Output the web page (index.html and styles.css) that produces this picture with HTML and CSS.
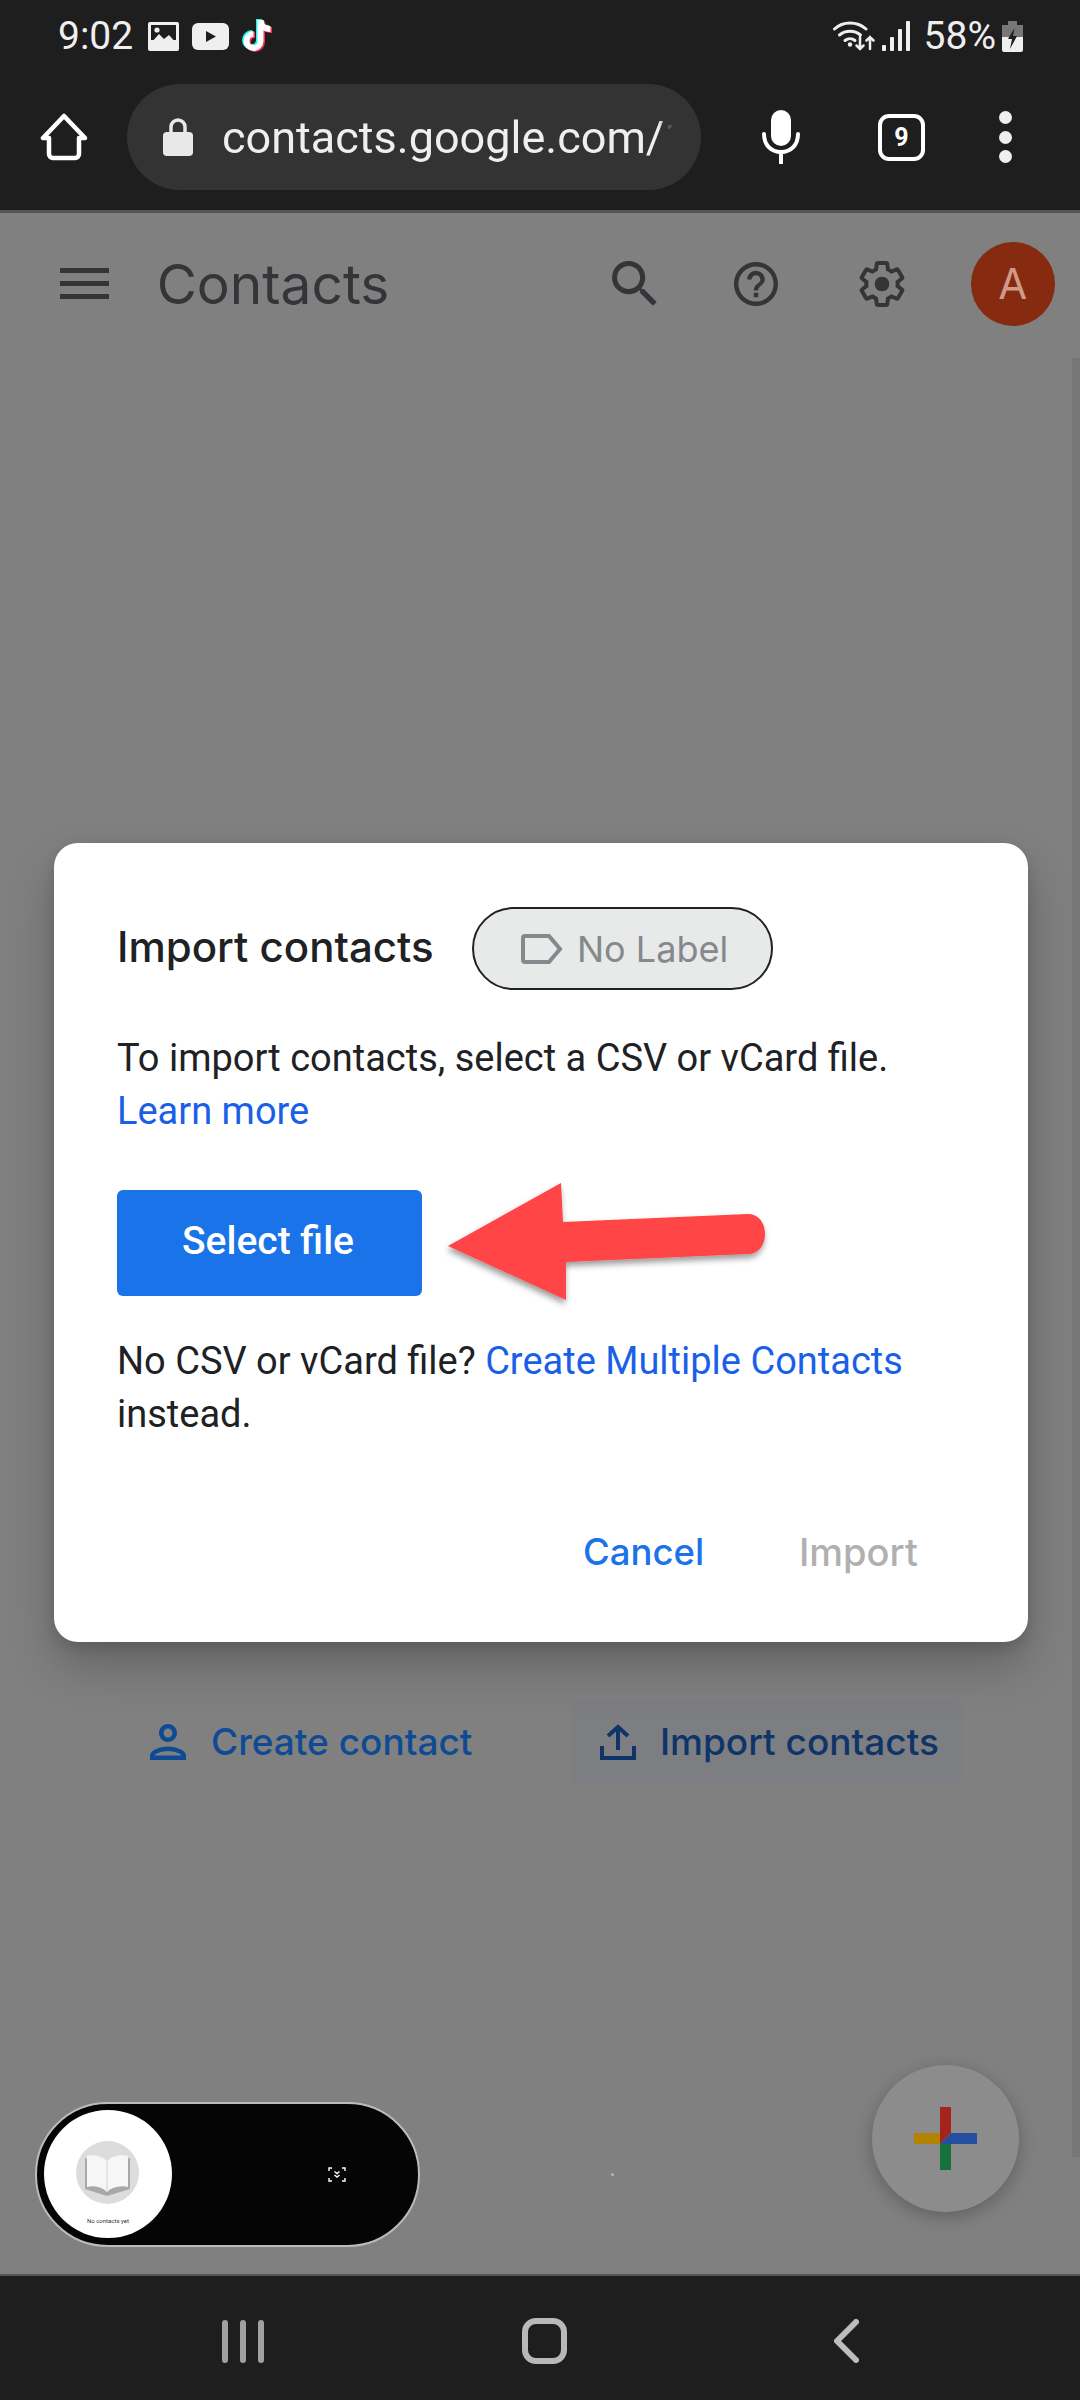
FILE: index.html
```html
<!DOCTYPE html>
<html lang="en">
<head>
<meta charset="utf-8">
<title>Contacts</title>
<link rel="stylesheet" href="styles.css">
</head>
<body>
<div class="phone">
  <header class="chrome">
    <div class="statusbar">
      <span class="time">9:02</span>
      <svg class="st-gallery" viewBox="0 0 31 29"><rect width="31" height="29" rx="2" fill="#efefef"/><rect x="3" y="3" width="25" height="15" fill="#1e1e1e"/><circle cx="9" cy="8" r="2.6" fill="#efefef"/><path d="M3 21l8-9 5 5 5-4 7 8v3H3z" fill="#efefef"/></svg>
      <svg class="st-yt" viewBox="0 0 37 27"><rect width="37" height="27" rx="6" fill="#efefef"/><path d="M14 8l10 5.500-10 5.500z" fill="#1e1e1e"/></svg>
      <svg class="st-tiktok" viewBox="0 0 36 38" fill="none" stroke-width="6">
        <g stroke="#25f4ee"><path d="M19 4v21a7 7 0 1 1-7-7"/><path d="M19 4c0 6 4 9 10 9"/></g>
        <g stroke="#fe2c55" transform="translate(3 2)"><path d="M19 4v21a7 7 0 1 1-7-7"/><path d="M19 4c0 6 4 9 10 9"/></g>
        <g stroke="#fff" transform="translate(1.500 1)"><path d="M19 4v21a7 7 0 1 1-7-7"/><path d="M19 4c0 6 4 9 10 9"/></g>
      </svg>
      <span class="status-spacer"></span>
      <svg class="st-wifi" viewBox="0 0 42 32" fill="none" stroke="#efefef" stroke-width="3" stroke-linecap="round"><path d="M1.500 9C10 1 24 1 33 9"/><path d="M6.500 15c6-5 15-5 21 0"/><path d="M12 20.500c3-2.500 7-2.500 10 0"/><circle cx="17" cy="24.500" r="2.200" fill="#efefef" stroke="none"/><path d="M27 17v12m-3.500-3.500L27 29l3.500-3.500" stroke-width="2.500"/><path d="M37 29V17m-3.500 3.500L37 17l3.500 3.500" stroke-width="2.500"/></svg>
      <svg class="st-signal" viewBox="0 0 28 30" fill="#efefef"><rect x="0" y="24" width="4" height="6" rx="1"/><rect x="8" y="16" width="4" height="14" rx="1"/><rect x="16" y="8" width="4" height="22" rx="1"/><rect x="24" y="0" width="4" height="30" rx="1"/></svg>
      <span class="battery-text">58%</span>
      <svg class="st-battery" viewBox="0 0 21 31"><rect x="6" y="0" width="9" height="4" fill="#777"/><rect x="0" y="4" width="21" height="12" fill="#777"/><path d="M0 16h21v13a2 2 0 0 1-2 2H2a2 2 0 0 1-2-2z" fill="#efefef"/><path d="M12.500 7L6 18h4l-2 10 7-13h-4z" fill="#1e1e1e"/></svg>
    </div>
    <div class="toolbar">
      <svg class="tb-home" viewBox="0 0 48 48" fill="none" stroke="#fff" stroke-width="4.500" stroke-linejoin="round"><path d="M24 3L3 25h6v16a4 4 0 0 0 4 4h22a4 4 0 0 0 4-4V25h6z"/></svg>
      <div class="urlbar">
        <svg class="lock" viewBox="0 0 30 38"><path d="M8 15V9a7 7 0 0 1 14 0v6" fill="none" stroke="#e8e8e8" stroke-width="3.500"/><rect y="14" width="30" height="24" rx="4" fill="#e8e8e8"/></svg>
        <span class="url">contacts.google.com/1</span>
      </div>
      <svg class="tb-mic" viewBox="0 0 38 54"><rect x="9" y="0" width="20" height="36" rx="10" fill="#fff"/><path d="M2 24c0 11 7 18 17 18s17-7 17-18M19 42v12" fill="none" stroke="#fff" stroke-width="4" stroke-linecap="round"/></svg>
      <div class="tabs">9</div>
      <div class="dots"><i></i><i></i><i></i></div>
    </div>
  </header>

  <main class="page">
    <div class="appbar">
      <div class="burger"><i></i><i></i><i></i></div>
      <h1 class="brand">Contacts</h1>
      <svg class="ab-icon ab-search" viewBox="3 3 18 18"><path d="M15.500 14h-.79l-.28-.27A6.471 6.471 0 0 0 16 9.500 6.500 6.500 0 1 0 9.500 16c1.610 0 3.090-.59 4.230-1.570l.27.28v.79l5 4.990L20.490 19l-4.990-5zm-6 0C7.010 14 5 11.990 5 9.500S7.010 5 9.500 5 14 7.010 14 9.500 11.990 14 9.500 14z"/></svg>
      <svg class="ab-icon ab-help" viewBox="2 2 20 20"><path d="M11 18h2v-2h-2v2zm1-16C6.480 2 2 6.480 2 12s4.480 10 10 10 10-4.480 10-10S17.520 2 12 2zm0 18c-4.410 0-8-3.590-8-8s3.590-8 8-8 8 3.590 8 8-3.590 8-8 8zm0-14c-2.210 0-4 1.790-4 4h2c0-1.100.9-2 2-2s2 .9 2 2c0 2-3 1.750-3 5h2c0-2.250 3-2.500 3-5 0-2.210-1.790-4-4-4z"/></svg>
      <svg class="ab-icon ab-gear" viewBox="1.500 1 21 22"><path d="M19.430 12.980c.04-.32.07-.64.07-.98s-.03-.66-.07-.98l2.110-1.650c.19-.15.24-.42.12-.64l-2-3.460c-.12-.22-.39-.3-.61-.22l-2.490 1c-.52-.4-1.080-.73-1.690-.98l-.38-2.650C14.460 2.180 14.250 2 14 2h-4c-.25 0-.46.18-.49.42l-.38 2.650c-.61.25-1.170.59-1.690.98l-2.490-1c-.23-.09-.49 0-.61.22l-2 3.460c-.13.22-.07.49.12.64l2.110 1.650c-.04.32-.07.65-.07.98s.03.66.07.98l-2.110 1.650c-.19.15-.24.42-.12.64l2 3.460c.12.22.39.3.61.22l2.490-1c.52.4 1.080.73 1.690.98l.38 2.650c.03.24.24.42.49.42h4c.25 0 .46-.18.49-.42l.38-2.650c.61-.25 1.170-.59 1.690-.98l2.490 1c.23.09.49 0 .61-.22l2-3.460c.12-.22.07-.49-.12-.64l-2.110-1.650z" fill="none" stroke="#333538" stroke-width="1.900"/><circle cx="12" cy="12" r="3.500" fill="#333538"/></svg>
      <div class="avatar">A</div>
    </div>

    <div class="empty-actions">
      <div class="action action-create">
        <svg class="action-icon" viewBox="4 4 16 16"><path d="M12 6c1.100 0 2 .9 2 2s-.9 2-2 2-2-.9-2-2 .9-2 2-2m0 10c2.700 0 5.800 1.290 6 2H6c.23-.72 3.310-2 6-2m0-12C9.790 4 8 5.790 8 8s1.790 4 4 4 4-1.790 4-4-1.790-4-4-4zm0 10c-2.670 0-8 1.340-8 4v2h16v-2c0-2.660-5.330-4-8-4z"/></svg>
        <span>Create contact</span>
      </div>
      <div class="action action-import">
        <svg class="action-icon" viewBox="0 0 36 36" fill="none" stroke="#0e3468" stroke-width="4"><path d="M18 26V3M8 12L18 3l10 9"/><path d="M2 22v12h32V22"/></svg>
        <span>Import contacts</span>
      </div>
    </div>

    <div class="scrollbar"></div>

    <section class="dialog">
      <div class="dialog-head">
        <h2 class="dialog-title">Import contacts</h2>
        <div class="chip">
          <svg class="chip-tag" viewBox="0 0 42 30" fill="none" stroke="#85888c" stroke-width="4"><path d="M2 4a2 2 0 0 1 2-2h24l11 13-11 13H4a2 2 0 0 1-2-2z"/></svg>
          <span>No Label</span>
        </div>
      </div>
      <p class="dialog-text intro">To import contacts, select a CSV or vCard file.<br><a class="link">Learn more</a></p>
      <div class="select-btn">Select file</div>
      <p class="dialog-text alt">No CSV or vCard file? <a class="link">Create Multiple Contacts</a><br>instead.</p>
      <div class="dialog-actions">
        <span class="btn-cancel">Cancel</span>
        <span class="btn-import">Import</span>
      </div>
      <svg class="arrow" viewBox="0 0 340 140">
        <defs><filter id="arrow-shadow" x="-10%" y="-10%" width="120%" height="130%"><feDropShadow dx="-1" dy="4" stdDeviation="3" flood-color="#000" flood-opacity=".4"/></filter></defs>
        <path d="M0 63L113 0l2 39 185-8c10 0 17 8 17 20s-7 20-17 20l-182 8 0 38z" fill="#ff4444" filter="url(#arrow-shadow)"/>
      </svg>
    </section>

    <div class="recorder">
      <div class="rec-thumb">
        <svg class="rec-book" viewBox="0 0 63 63"><circle cx="31.500" cy="31.500" r="31.500" fill="#dcdcdc"/><path d="M9 17l22 6 23-6v31l-23 7-22-7z" fill="#a8a8a8"/><path d="M11 15c8-2 15 0 20 5 5-5 12-7 21-5v31c-8-2-16 0-21 5-5-5-12-7-20-5z" fill="#f6f6f6"/><path d="M31 20v31" stroke="#dedede" stroke-width="1.500"/></svg>
        <span class="rec-caption">No contacts yet</span>
      </div>
      <svg class="rec-scan" viewBox="0 0 18 15" fill="none" stroke="#fff" stroke-width="1.400"><path d="M1 4V1h3M14 1h3v3M17 11v3h-3M4 14H1v-3"/><path d="M6.500 4.500L9 6.500l2.500-2M6.500 8L9 10l2.500-2"/></svg>
    </div>
    <div class="speck"></div>

    <div class="fab">
      <svg class="fab-plus" viewBox="0 0 63 63"><path d="M26 0h11v26l-11 11z" fill="#a5231b"/><path d="M37 26h26v11H26z" fill="#234f9e"/><path d="M26 37h11v26H26z" fill="#17713a"/><path d="M0 26h26v11H0z" fill="#b38200"/></svg>
    </div>
  </main>

  <nav class="navbar">
    <div class="nav-recents"><i></i><i></i><i></i></div>
    <div class="nav-home"></div>
    <svg class="nav-back" viewBox="0 0 25 44" fill="none" stroke="#bdbdbd" stroke-width="6" stroke-linecap="round" stroke-linejoin="round"><path d="M22 3L3 22l19 19"/></svg>
  </nav>
</div>
</body>
</html>
```

FILE: styles.css
```css
* { box-sizing: border-box; }
html, body { margin: 0; padding: 0; }
body { width: 1080px; height: 2400px; overflow: hidden; background: #808080; font-family: "Roboto", "Liberation Sans", sans-serif; }
h1, h2, p { margin: 0; font-weight: normal; }
svg { display: block; flex: none; }
.phone { width: 1080px; height: 2400px; display: flex; flex-direction: column; }

.chrome { background: #1e1e1e; height: 213px; border-bottom: 3px solid #555; flex: none; }
.statusbar { height: 70px; display: flex; align-items: center; padding: 2px 57px 0 58px; color: #efefef; }
.time { font-size: 39px; line-height: 40px; width: 90px; }
.st-gallery { width: 31px; height: 29px; }
.st-yt { width: 37px; height: 27px; margin-left: 13px; }
.st-tiktok { width: 36px; height: 38px; margin-left: 11px; margin-top: -4px; }
.status-spacer { flex: 1; }
.st-wifi { width: 42px; height: 32px; }
.st-signal { width: 28px; height: 30px; margin-left: 7px; }
.battery-text { font-size: 39px; line-height: 40px; margin-left: 14px; }
.st-battery { width: 21px; height: 31px; margin-left: 6px; }

.toolbar { height: 140px; display: flex; align-items: center; padding: 0 0 6px 40px; }
.tb-home { width: 48px; height: 48px; }
.urlbar { width: 574px; height: 106px; margin-left: 39px; border-radius: 53px; background: #333; display: flex; align-items: center; padding: 0 0 0 36px; overflow: hidden; }
.lock { width: 30px; height: 38px; }
.url { flex: none; width: 460px; font-size: 45px; color: #efefef; margin-left: 29px; white-space: nowrap; overflow: hidden; -webkit-mask-image: linear-gradient(to right, #000 95%, transparent 98%); mask-image: linear-gradient(to right, #000 95%, transparent 98%); }
.tb-mic { width: 38px; height: 54px; margin-left: 61px; }
.tabs { width: 47px; height: 47px; margin-left: 78px; border: 4.500px solid #fff; border-radius: 11px; color: #fff; font-size: 25px; font-weight: 700; display: flex; align-items: center; justify-content: center; }
.dots { display: flex; flex-direction: column; gap: 6.500px; margin-left: 74px; }
.dots i { width: 13px; height: 13px; border-radius: 50%; background: #efefef; }

.page { position: relative; flex: 1; background: #808080; min-height: 0; }

.appbar { height: 114px; padding: 27px 25px 0 60px; display: flex; align-items: center; }
.burger { width: 49px; display: flex; flex-direction: column; gap: 8px; }
.burger i { height: 5px; background: #333538; }
.brand { font-family: "Inter", "Roboto", sans-serif; font-size: 55px; line-height: 60px; color: #333538; margin-left: 48px; width: 458px; white-space: nowrap; }
.ab-icon { fill: #333538; }
.ab-search { width: 46px; height: 46px; }
.ab-help { width: 44px; height: 44px; margin-left: 76px; }
.ab-gear { width: 46px; height: 46px; margin-left: 81px; }
.avatar { width: 85px; height: 84px; margin-left: 66px; border-radius: 50%; background: #862a10; color: #cf9a88; font-family: "Inter", sans-serif; font-size: 42px; display: flex; align-items: center; justify-content: center; }

.empty-actions { display: flex; padding: 1373px 0 0 138px; align-items: center; }
.action { display: flex; align-items: center; font-size: 37px; line-height: 84px; white-space: nowrap; font-family: "Inter", "Roboto", sans-serif; font-weight: 500; }
.action-create { color: #0f4a94; width: 432px; }
.action-import { color: #0e3468; background: #7c7e82; border-radius: 8px; padding: 0 0 0 30px; width: 392px; }
.action-icon { width: 36px; height: 36px; fill: #0f4a94; }
.action-import .action-icon { fill: none; margin-right: 24px; }
.action-create .action-icon { margin-right: 25px; margin-left: 12px; }

.scrollbar { position: absolute; right: 0; top: 145px; width: 8px; height: 1799px; background: #777; }

.dialog { position: absolute; left: 54px; top: 630px; width: 974px; height: 799px; background: #fff; border-radius: 24px; padding: 64px 63px 0; box-shadow: 0 24px 48px rgba(0, 0, 0, .22), 0 6px 14px rgba(0,0,0,.12); }
.dialog-head { display: flex; align-items: center; height: 83px; }
.dialog-title { font-family: "Inter", "Roboto", sans-serif; font-weight: 500; font-size: 42px; line-height: 50px; padding-bottom: 3px; color: #202124; white-space: nowrap; width: 355px; }
.chip { width: 301px; height: 83px; border: 2px solid #202124; border-radius: 42px; background: #e8eaea; display: flex; align-items: center; padding-left: 47px; color: #85888c; font-family: "Inter", "Roboto", sans-serif; font-size: 36px; }
.chip-tag { width: 42px; height: 30px; margin-right: 14px; }
.dialog-text { font-size: 38px; line-height: 53px; color: #202124; white-space: nowrap; }
.intro { margin-top: 42px; }
.link { color: #1a5fe8; }
.select-btn { width: 305px; height: 106px; margin-top: 52px; border-radius: 6px; background: #1a73e8; color: #fff; font-size: 39px; font-weight: 500; display: flex; align-items: center; justify-content: center; padding: 0 3px 4px 0; }
.alt { margin-top: 39px; }
.dialog-actions { display: flex; padding-left: 466px; margin-top: 86px; font-family: "Inter", "Roboto", sans-serif; font-weight: 500; line-height: 50px; }
.btn-cancel { color: #1a73e8; width: 216px; font-size: 36.500px; }
.btn-import { color: #b0b0b0; font-size: 38px; }
.arrow { position: absolute; left: 394px; top: 340px; width: 340px; height: 140px; overflow: visible; }

.recorder { position: absolute; left: 35px; top: 1889px; width: 385px; height: 145px; border: 2px solid #bbb; border-radius: 73px; background: #050505; }
.rec-thumb { position: absolute; left: 7px; top: 6px; width: 128px; height: 128px; border-radius: 50%; background: #fff; }
.rec-book { position: absolute; left: 32px; top: 31px; width: 63px; height: 63px; }
.rec-caption { position: absolute; left: 0; right: 0; top: 107px; text-align: center; font-size: 6px; line-height: 8px; color: #333; }
.rec-scan { position: absolute; left: 291px; top: 63px; width: 18px; height: 15px; }
.speck { position: absolute; left: 611px; top: 1960px; width: 3px; height: 3px; border-radius: 50%; background: #b5b5b5; }

.fab { position: absolute; left: 872px; top: 1852px; width: 147px; height: 147px; border-radius: 50%; background: #8c8c8c; box-shadow: 0 5px 18px rgba(0, 0, 0, .25); display: flex; align-items: center; justify-content: center; }
.fab-plus { width: 63px; height: 63px; }

.navbar { height: 126px; flex: none; background: #1e1e1e; border-top: 2px solid #555; display: flex; align-items: center; padding-top: 6px; }
.nav-recents { display: flex; gap: 12px; margin-left: 222px; }
.nav-recents i { width: 6px; height: 43px; border-radius: 3px; background: #a0a0a0; }
.nav-home { width: 45px; height: 46px; margin-left: 258px; border: 6px solid #b8b8b8; border-radius: 14px; }
.nav-back { width: 25px; height: 44px; margin-left: 267px; }
```
